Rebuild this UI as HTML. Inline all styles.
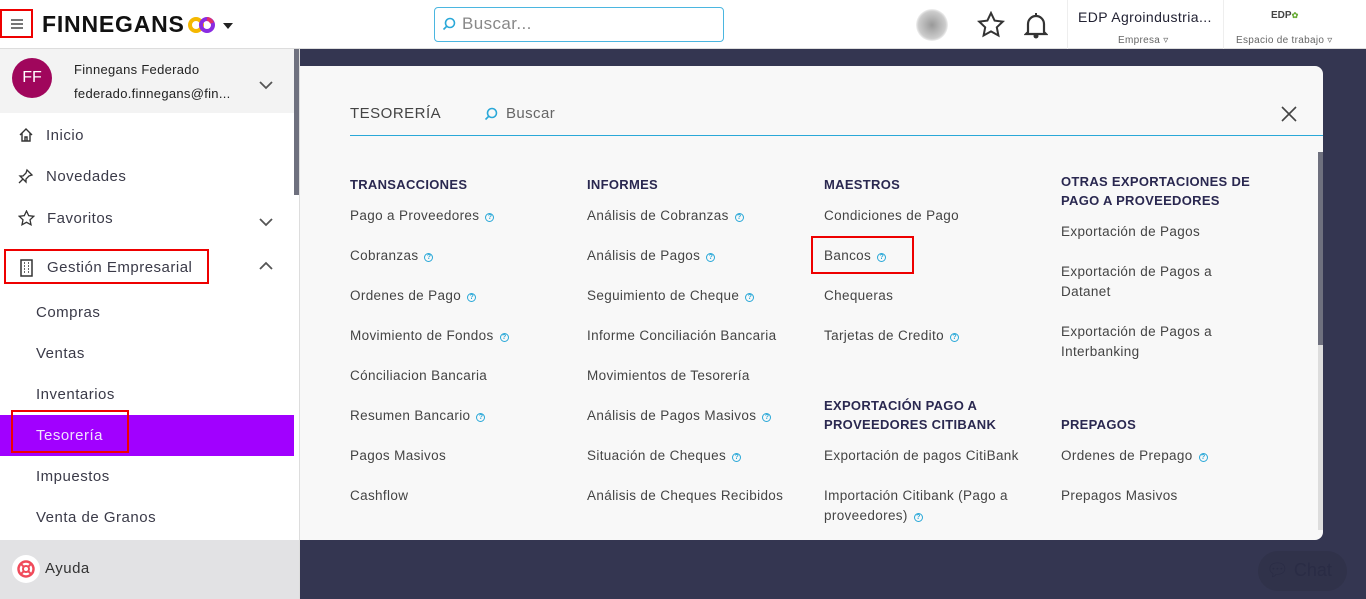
<!DOCTYPE html>
<html><head><meta charset="utf-8"><style>
*{margin:0;padding:0;box-sizing:border-box}
body{width:1366px;height:599px;overflow:hidden;background:#343651;font-family:"Liberation Sans",sans-serif;position:relative;color:#333}
.abs{position:absolute}
.top{left:0;top:0;width:1366px;height:49px;background:#fff;border-bottom:1px solid #ddd}
.side{left:0;top:49px;width:300px;height:550px;background:#fff;border-right:1px solid #ddd}
.t{position:absolute;white-space:nowrap}
.nav{font-size:15px;color:#3a3a48;letter-spacing:.5px}
.panel{left:300px;top:66px;width:1023px;height:474px;background:#f8f8f8;border-radius:0 8px 8px 0}
.h{font-size:13px;font-weight:bold;color:#2a2850;letter-spacing:.3px;line-height:19px}
.i{font-size:13.5px;color:#444;line-height:20px;letter-spacing:.35px}
.q{display:inline-block;width:9px;height:9px;border:1.3px solid #2aa8d8;border-radius:50%;margin-left:6px;vertical-align:1px;font-size:7px;line-height:7px;text-align:center;color:#2aa8d8;font-weight:bold;letter-spacing:0}
.red{position:absolute;border:2px solid #e00}
</style></head><body>
<div class="abs top"></div>
<div class="red" style="left:0;top:9px;width:33px;height:29px"></div>
<div class="abs" style="left:11px;top:19px;width:12px;height:1.5px;background:#777;box-shadow:0 4px 0 #777,0 8px 0 #777"></div>
<div class="t" style="left:42px;top:11px;font-size:23px;font-weight:bold;color:#111;letter-spacing:.8px">FINNEGANS</div>
<svg class="abs" style="left:188px;top:16px" width="28" height="18"><circle cx="8" cy="9" r="6" fill="none" stroke="#f5b800" stroke-width="4"/><circle cx="19" cy="9" r="6" fill="none" stroke="#8a2be2" stroke-width="4"/><path d="M19 3a6 6 0 0 1 5 4" stroke="#e0306a" stroke-width="4" fill="none"/></svg>
<div class="abs" style="left:223px;top:23px;border:5px solid transparent;border-top:6px solid #222"></div>
<div class="abs" style="left:434px;top:7px;width:290px;height:35px;border:1px solid #4bb6e0;border-radius:4px"></div>
<svg class="abs" style="left:442px;top:17px" width="14" height="14"><circle cx="8" cy="6" r="4.5" fill="none" stroke="#2aa8d8" stroke-width="1.6"/><path d="M5 9L1.5 12.5" stroke="#2aa8d8" stroke-width="1.6"/></svg>
<div class="t" style="left:462px;top:14px;font-size:17px;color:#888;letter-spacing:.4px">Buscar...</div>
<div class="abs" style="left:916px;top:9px;width:32px;height:32px;border-radius:50%;background:radial-gradient(#999,#ccc 60%,#fff 75%)"></div>
<svg class="abs" style="left:977px;top:11px" width="28" height="28"><path d="M14 2l3.6 7.6 8.2 1-6 5.7 1.6 8.2L14 20.4l-7.4 4.1 1.6-8.2-6-5.7 8.2-1z" fill="none" stroke="#333" stroke-width="2"/></svg>
<svg class="abs" style="left:1024px;top:11px" width="24" height="28"><path d="M4 21V13a8 8 0 0 1 16 0v8l2 2H2z" fill="none" stroke="#333" stroke-width="2.2"/><circle cx="12" cy="25" r="2.5" fill="#333"/><path d="M12 2v3" stroke="#333" stroke-width="2"/></svg>
<div class="abs" style="left:1067px;top:0;width:1px;height:49px;background:#eee"></div>
<div class="abs" style="left:1223px;top:0;width:1px;height:49px;background:#eee"></div>
<div class="t" style="left:1078px;top:9px;font-size:14px;color:#223;letter-spacing:.4px">EDP Agroindustria...</div>
<div class="t" style="left:1118px;top:35px;font-size:10px;color:#666;letter-spacing:.3px">Empresa ▿</div>
<div class="t" style="left:1271px;top:10px;font-size:10px;font-weight:bold;color:#444">EDP<span style="color:#6a3;font-size:8px">✿</span></div>
<div class="t" style="left:1236px;top:35px;font-size:10px;color:#666;letter-spacing:.3px">Espacio de trabajo ▿</div>

<div class="abs side"></div>
<div class="abs" style="left:0;top:49px;width:294px;height:64px;background:#f3f3f3"></div>
<div class="abs" style="left:294px;top:49px;width:5px;height:146px;background:#6e707e"></div>
<div class="abs" style="left:12px;top:58px;width:40px;height:40px;border-radius:50%;background:#a0065c;color:#fff;font-size:16px;text-align:center;line-height:40px">FF</div>
<div class="t" style="left:74px;top:62px;font-size:13px;color:#222;letter-spacing:.3px">Finnegans Federado</div>
<div class="t" style="left:74px;top:86px;font-size:13px;color:#222;letter-spacing:.3px">federado.finnegans@fin...</div>
<svg class="abs" style="left:259px;top:81px" width="14" height="9"><path d="M1 1l6 6 6-6" fill="none" stroke="#555" stroke-width="1.8"/></svg>
<svg class="abs" style="left:18px;top:127px" width="16" height="16"><path d="M2 8L8 2l6 6M4 6v8h8V6M7 14v-4h2v4" fill="none" stroke="#333" stroke-width="1.4"/></svg>
<div class="t nav" style="left:46px;top:127px">Inicio</div>
<svg class="abs" style="left:18px;top:168px" width="16" height="16"><path d="M9 2l5 5-3 1-3 3 0 3-6-6 3 0 3-3zM5 11l-4 4" fill="none" stroke="#333" stroke-width="1.3"/></svg>
<div class="t nav" style="left:46px;top:168px">Novedades</div>
<svg class="abs" style="left:18px;top:210px" width="17" height="17"><path d="M8.5 1l2.2 4.7 5 .6-3.7 3.5 1 5-4.5-2.5L4 14.8l1-5L1.3 6.3l5-.6z" fill="none" stroke="#333" stroke-width="1.3"/></svg>
<div class="t nav" style="left:47px;top:210px">Favoritos</div>
<svg class="abs" style="left:259px;top:218px" width="14" height="9"><path d="M1 1l6 6 6-6" fill="none" stroke="#555" stroke-width="1.8"/></svg>
<div class="red" style="left:4px;top:249px;width:205px;height:35px"></div>
<svg class="abs" style="left:20px;top:259px" width="13" height="18"><rect x="1" y="1" width="11" height="16" fill="none" stroke="#333" stroke-width="1.5"/><path d="M4 4h1M8 4h1M4 7h1M8 7h1M4 10h1M8 10h1M4 13h1M8 13h1" stroke="#333" stroke-width="1.5"/></svg>
<div class="t nav" style="left:47px;top:259px">Gestión Empresarial</div>
<svg class="abs" style="left:259px;top:261px" width="14" height="9"><path d="M1 8l6-6 6 6" fill="none" stroke="#555" stroke-width="1.8"/></svg>
<div class="t nav" style="left:36px;top:304px">Compras</div>
<div class="t nav" style="left:36px;top:345px">Ventas</div>
<div class="t nav" style="left:36px;top:386px">Inventarios</div>
<div class="abs" style="left:0;top:415px;width:294px;height:41px;background:#a100ff"></div>
<div class="red" style="left:11px;top:410px;width:118px;height:43px"></div>
<div class="t nav" style="left:36px;top:427px;color:#f0e0ff">Tesorería</div>
<div class="t nav" style="left:36px;top:468px">Impuestos</div>
<div class="t nav" style="left:36px;top:509px">Venta de Granos</div>
<div class="abs" style="left:0;top:540px;width:299px;height:59px;background:#e2e2e4"></div>
<div class="abs" style="left:12px;top:555px;width:28px;height:28px;border-radius:50%;background:#fff"></div>
<svg class="abs" style="left:16px;top:559px" width="20" height="20"><circle cx="10" cy="10" r="7.5" fill="none" stroke="#f04a5a" stroke-width="2.5"/><circle cx="10" cy="10" r="3" fill="none" stroke="#f04a5a" stroke-width="2"/><path d="M5 5l3 3M15 5l-3 3M5 15l3-3M15 15l-3-3" stroke="#f04a5a" stroke-width="2"/></svg>
<div class="t nav" style="left:45px;top:560px;color:#333">Ayuda</div>

<div class="abs panel"></div>
<div class="t" style="left:350px;top:105px;font-size:15px;color:#444;letter-spacing:.5px">TESORERÍA</div>
<svg class="abs" style="left:484px;top:107px" width="14" height="14"><circle cx="8" cy="6" r="4.5" fill="none" stroke="#2aa8d8" stroke-width="1.6"/><path d="M5 9L1.5 12.5" stroke="#2aa8d8" stroke-width="1.6"/></svg>
<div class="t" style="left:506px;top:105px;font-size:15px;color:#666;letter-spacing:.4px">Buscar</div>
<svg class="abs" style="left:1281px;top:106px" width="16" height="16"><path d="M1 1l14 14M15 1L1 15" stroke="#444" stroke-width="1.6"/></svg>
<div class="abs" style="left:350px;top:135px;width:973px;height:1px;background:#2aa8d8"></div>
<div class="abs" style="left:1318px;top:152px;width:5px;height:193px;background:#6e707e"></div>
<div class="abs" style="left:1318px;top:345px;width:5px;height:185px;background:#ddd"></div>

<div class="t h" style="left:350px;top:175px">TRANSACCIONES</div>
<div class="t i" style="left:350px;top:206px">Pago a Proveedores<span class="q">?</span></div>
<div class="t i" style="left:350px;top:246px">Cobranzas<span class="q">?</span></div>
<div class="t i" style="left:350px;top:286px">Ordenes de Pago<span class="q">?</span></div>
<div class="t i" style="left:350px;top:326px">Movimiento de Fondos<span class="q">?</span></div>
<div class="t i" style="left:350px;top:366px">Cónciliacion Bancaria</div>
<div class="t i" style="left:350px;top:406px">Resumen Bancario<span class="q">?</span></div>
<div class="t i" style="left:350px;top:446px">Pagos Masivos</div>
<div class="t i" style="left:350px;top:486px">Cashflow</div>

<div class="t h" style="left:587px;top:175px">INFORMES</div>
<div class="t i" style="left:587px;top:206px">Análisis de Cobranzas<span class="q">?</span></div>
<div class="t i" style="left:587px;top:246px">Análisis de Pagos<span class="q">?</span></div>
<div class="t i" style="left:587px;top:286px">Seguimiento de Cheque<span class="q">?</span></div>
<div class="t i" style="left:587px;top:326px">Informe Conciliación Bancaria</div>
<div class="t i" style="left:587px;top:366px">Movimientos de Tesorería</div>
<div class="t i" style="left:587px;top:406px">Análisis de Pagos Masivos<span class="q">?</span></div>
<div class="t i" style="left:587px;top:446px">Situación de Cheques<span class="q">?</span></div>
<div class="t i" style="left:587px;top:486px">Análisis de Cheques Recibidos</div>

<div class="t h" style="left:824px;top:175px">MAESTROS</div>
<div class="t i" style="left:824px;top:206px">Condiciones de Pago</div>
<div class="red" style="left:811px;top:236px;width:103px;height:38px"></div>
<div class="t i" style="left:824px;top:246px">Bancos<span class="q">?</span></div>
<div class="t i" style="left:824px;top:286px">Chequeras</div>
<div class="t i" style="left:824px;top:326px">Tarjetas de Credito<span class="q">?</span></div>
<div class="t h" style="left:824px;top:396px">EXPORTACIÓN PAGO A<br>PROVEEDORES CITIBANK</div>
<div class="t i" style="left:824px;top:446px">Exportación de pagos CitiBank</div>
<div class="t i" style="left:824px;top:486px">Importación Citibank (Pago a<br>proveedores)<span class="q">?</span></div>

<div class="t h" style="left:1061px;top:172px">OTRAS EXPORTACIONES DE<br>PAGO A PROVEEDORES</div>
<div class="t i" style="left:1061px;top:222px">Exportación de Pagos</div>
<div class="t i" style="left:1061px;top:262px">Exportación de Pagos a<br>Datanet</div>
<div class="t i" style="left:1061px;top:322px">Exportación de Pagos a<br>Interbanking</div>
<div class="t h" style="left:1061px;top:415px">PREPAGOS</div>
<div class="t i" style="left:1061px;top:446px">Ordenes de Prepago<span class="q">?</span></div>
<div class="t i" style="left:1061px;top:486px">Prepagos Masivos</div>

<div class="abs" style="left:1258px;top:551px;width:89px;height:40px;border-radius:20px;background:#30324a"></div>
<div class="t" style="left:1266px;top:560px;font-size:18px;color:#2a2c45">💬︎ Chat</div>
</body></html>
